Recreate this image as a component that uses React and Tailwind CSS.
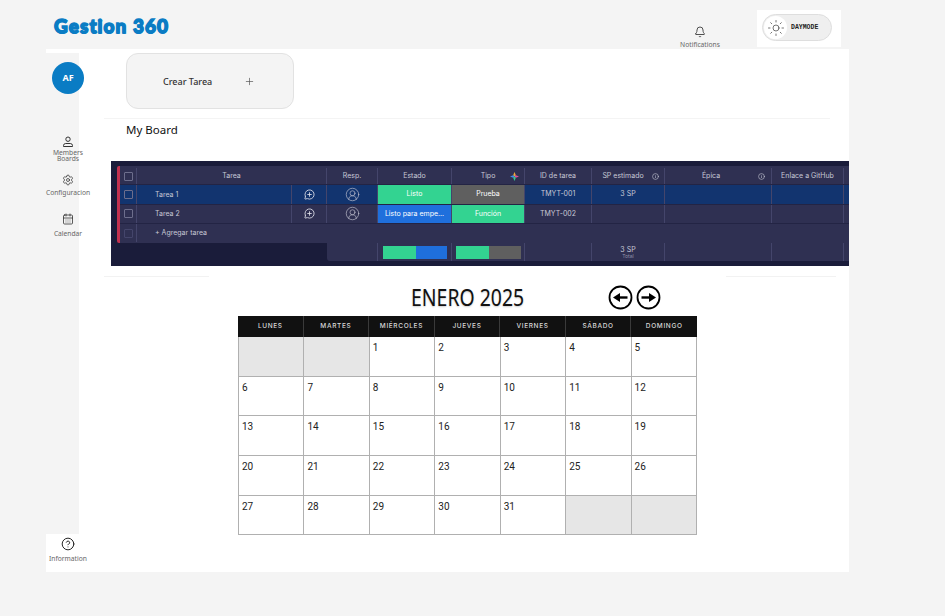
import React from 'react';
import { Bell, Plus, Settings, CalendarDays, CircleHelp, Sun, MessageCirclePlus, CircleUserRound, Info } from 'lucide-react';

const gridCols = 'grid grid-cols-[17px_155px_35px_51px_74px_73px_67px_73px_107px_72px_5px]';
const cell = 'flex items-center justify-center border-r border-[#44456b] min-w-0';

const Check = () => <div className="w-[9px] h-[9px] rounded-[1px] border border-[#6d6e8c]"></div>;

const BoardRow = ({ name, estado, estadoBg, tipo, tipoBg, id, sp, selected }) => {
  const bg = selected ? 'bg-[#12346f]' : 'bg-[#2f3052]';
  return (
    <div className={`${gridCols} h-[19.5px] border-b border-[#232444] ${bg}`}>
      <div className={cell}><Check /></div>
      <div className={`${cell} justify-start pl-[18px] pt-px`}>{name}</div>
      <div className={cell}><MessageCirclePlus size={11} strokeWidth={1.8} className="text-[#e4e5ee]" /></div>
      <div className={cell}><CircleUserRound size={15} strokeWidth={1} /></div>
      <div className={`${cell} ${estadoBg} text-white`}>{estado}</div>
      <div className={`${cell} ${tipoBg} text-white`}>{tipo}</div>
      <div className={cell}>{id}</div>
      <div className={cell}>{sp}</div>
      <div className={cell}></div>
      <div className={cell}></div>
      <div></div>
    </div>
  );
};

const Board = () => (
  <div className="w-[738px] h-[105px] bg-[#1a1c3a] pt-[5px] pl-[6px] text-[#c8c9d6] text-[7px] font-['Inter',sans-serif]">
    <div className="border-l-[3px] border-[#c2304f] rounded-l-[2px]">
      <div className={`${gridCols} h-[19px] pt-[2px] bg-[#2f3052] border-b border-[#232444]`}>
        <div className={cell}><Check /></div>
        <div className={`${cell} col-span-2`}>Tarea</div>
        <div className={cell}>Resp.</div>
        <div className={cell}>Estado</div>
        <div className={`${cell} relative`}>
          Tipo
          <svg className="absolute right-[5px]" width="9" height="9" viewBox="0 0 10 10">
            <path d="M5 0 L6.5 3.5 L5 5 L3.5 3.5 Z" fill="#f0a63c" />
            <path d="M10 5 L6.5 6.5 L5 5 L6.5 3.5 Z" fill="#e0509a" />
            <path d="M5 10 L3.5 6.5 L5 5 L6.5 6.5 Z" fill="#35c98f" />
            <path d="M0 5 L3.5 3.5 L5 5 L3.5 6.5 Z" fill="#3f8fe8" />
          </svg>
        </div>
        <div className={cell}>ID de tarea</div>
        <div className={`${cell} relative pr-[10px]`}>
          SP estimado
          <Info size={7} className="absolute right-[5px]" />
        </div>
        <div className={`${cell} relative pr-[14px]`}>
          Épica
          <Info size={7} className="absolute right-[6px]" />
        </div>
        <div className={cell}>Enlace a GitHub</div>
        <div></div>
      </div>
      <BoardRow name="Tarea 1" estado="Listo" estadoBg="bg-[#33d391]" tipo="Prueba" tipoBg="bg-[#5f5f5f]" id="TMYT-001" sp="3 SP" selected />
      <BoardRow name="Tarea 2" estado="Listo para empe..." estadoBg="bg-[#1f6fdc]" tipo="Función" tipoBg="bg-[#33d391]" id="TMYT-002" sp="" />
      <div className={`${gridCols} h-[19px] pb-px bg-[#2f3052]`}>
        <div className={cell}><div className="w-[9px] h-[9px] rounded-[1px] border border-[#44456b]"></div></div>
        <div className="col-span-10 flex items-center pl-[18px]">+ Agregar tarea</div>
      </div>
    </div>
    <div className={`${gridCols} h-[18px] pl-[3px]`}>
      <div className="col-span-3"></div>
      <div className={`${cell} bg-[#2f3052] rounded-bl-[3px]`}></div>
      <div className={`${cell} bg-[#2f3052]`}>
        <div className="flex w-[64px] h-[13px]">
          <div className="w-[33px] bg-[#33d391]"></div>
          <div className="flex-1 bg-[#1f6fdc]"></div>
        </div>
      </div>
      <div className={`${cell} bg-[#2f3052]`}>
        <div className="flex w-[65px] h-[13px]">
          <div className="w-[33px] bg-[#33d391]"></div>
          <div className="flex-1 bg-[#5f5f5f]"></div>
        </div>
      </div>
      <div className={`${cell} bg-[#2f3052]`}></div>
      <div className={`${cell} bg-[#2f3052] flex-col leading-[7px]`}>
        <span>3 SP</span>
        <span className="text-[5px] leading-[6px] text-[#8f90a8]">Total</span>
      </div>
      <div className={`${cell} bg-[#2f3052]`}></div>
      <div className={`${cell} bg-[#2f3052]`}></div>
      <div className="bg-[#2f3052]"></div>
    </div>
  </div>
);

const days = ['LUNES', 'MARTES', 'MIÉRCOLES', 'JUEVES', 'VIERNES', 'SÁBADO', 'DOMINGO'];
const cells = [null, null, 1, 2, 3, 4, 5, 6, 7, 8, 9, 10, 11, 12, 13, 14, 15, 16, 17, 18, 19, 20, 21, 22, 23, 24, 25, 26, 27, 28, 29, 30, 31, null, null];

const Calendar = () => (
  <div className="w-[459px]">
    <div className="grid grid-cols-7 h-[21px] bg-[#111111]">
      {days.map((d) => (
        <div key={d} className="flex items-center justify-center border-r border-[#3a3a3a] last:border-r-0 text-[#d8d8d8] text-[6.5px] font-medium tracking-[0.1em] font-['Inter',sans-serif]">{d}</div>
      ))}
    </div>
    <div className="grid grid-cols-7 border-l border-[#b0b0b0]">
      {cells.map((c, i) => (
        <div key={i} className={`h-[39.7px] border-r border-b border-[#b0b0b0] pl-[3px] pt-[3px] text-[10px] text-[#222] font-['Roboto',sans-serif] ${c ? 'bg-white' : 'bg-[#e6e6e6]'}`}>{c}</div>
      ))}
    </div>
  </div>
);

const MemberIcon = ({ className }) => (
  <svg className={className} width="12" height="12" viewBox="0 0 12 12" fill="none" stroke="currentColor" strokeWidth="1">
    <circle cx="6" cy="3.2" r="2.2" />
    <path d="M1.5 10.5 V9.5 A2.2 2.2 0 0 1 3.7 7.5 H8.3 A2.2 2.2 0 0 1 10.5 9.5 V10.5 Z" />
  </svg>
);

const ArrowButton = ({ flip, className }) => (
  <svg className={`${flip ? '-scale-x-100' : ''} ${className}`} width="25" height="25" viewBox="0 0 25 25" fill="none">
    <circle cx="12.5" cy="12.5" r="11" stroke="black" strokeWidth="1.8" />
    <path d="M5.5 12.5 H14" stroke="black" strokeWidth="2.4" />
    <path d="M13 8 L20 12.5 L13 17 Z" fill="black" />
  </svg>
);

export default function App() {
  return (
    <div className="h-[616px] w-[945px] overflow-hidden bg-[#f4f4f4] font-['Noto_Sans',sans-serif]">
      <header className="h-[49px] flex">
        <div className="ml-[54px] mt-[12px] w-[120px] h-[27px] text-[19px] leading-[27px] whitespace-nowrap font-black font-['Lato',sans-serif] text-[#0a7cc4] tracking-[0.055em] [-webkit-text-stroke:1.4px_#0a7cc4] [text-shadow:0_1px_0_#0a7cc4]">Gestion 360</div>
        <div className="ml-[501px] mt-[26px] w-[50px] flex flex-col items-center text-[6.7px] leading-[9px] text-[#666] whitespace-nowrap">
          <Bell size={12} strokeWidth={1.7} className="text-[#333] mb-[2px]" />
          Notifications
        </div>
        <div className="ml-[32px] mt-[10px] w-[84px] h-[37px] bg-white pl-[5px] pt-[4px]">
          <div className="w-[70px] h-[27px] rounded-full bg-[#efefef] border border-[#dedede] flex items-center pl-px">
            <div className="w-[23px] h-[23px] rounded-full bg-white flex items-center justify-center">
              <Sun size={18} strokeWidth={0.9} className="text-[#333]" />
            </div>
            <span className="ml-[4px] text-[6.5px] font-bold text-[#222] font-['Liberation_Mono',monospace]">DAYMODE</span>
          </div>
        </div>
      </header>
      <div className="ml-[46px] w-[803px] h-[523px] bg-white flex">
        <aside className="w-[33px] flex flex-col pt-[4px] text-[#666] text-[6.7px]">
          <div className="h-[481px] bg-[#f4f4f4] flex flex-col">
            <div className="w-[44px] flex justify-center mt-[9px]">
              <div className="w-[32px] h-[32px] rounded-full bg-[#0a7cc4] text-white text-[9px] font-bold flex items-center justify-center">AF</div>
            </div>
            <div className="w-[44px] mt-[42px] flex flex-col items-center">
              <MemberIcon className="text-[#333] mb-[2px]" />
              <span className="text-center leading-[6px]">Members<br />Boards</span>
            </div>
            <div className="w-[44px] mt-[12px] flex flex-col items-center">
              <Settings size={12} strokeWidth={1.5} className="text-[#333] mb-[3px]" />
              <span className="leading-[7px] whitespace-nowrap">Configuracion</span>
            </div>
            <div className="w-[44px] mt-[17px] flex flex-col items-center">
              <CalendarDays size={12} strokeWidth={1.6} className="text-[#333] mb-[5px]" />
              <span className="leading-[7px]">Calendar</span>
            </div>
          </div>
          <div className="w-[44px] mt-[3px] flex flex-col items-center">
            <CircleHelp size={14} strokeWidth={1.7} className="text-[#222] mb-[4px]" />
            <span className="leading-[7px]">Information</span>
          </div>
        </aside>
        <main className="flex-1 min-w-0 flex flex-col">
          <div className="ml-[47px] mt-[4px] w-[168px] h-[56px] pt-px rounded-xl bg-[#f4f4f4] border border-[#e2e2e2] flex items-center text-[9px] font-medium text-[#333]">
            <span className="ml-[36px]">Crear Tarea</span>
            <Plus size={11} strokeWidth={1.5} className="ml-[32px] text-[#555]" />
          </div>
          <div className="ml-[25px] mt-[9px] w-[726px] border-t border-[#f4f4f4]"></div>
          <h2 className="ml-[47px] mt-[3px] text-[11.5px] leading-[16px] text-[#111]">My Board</h2>
          <div className="ml-[32px] mt-[23px]"><Board /></div>
          <div className="ml-[25px] mt-[10px] w-[732px] flex justify-between">
            <div className="w-[105px] border-t border-[#f2f2f2]"></div>
            <div className="w-[110px] border-t border-[#f2f2f2]"></div>
          </div>
          <div className="ml-[159px] mt-[2px] w-[459px] h-[37px] flex items-center">
            <h1 className="ml-[173px] w-[115px] -mt-px origin-left scale-x-[.81] text-[24px] text-[#111] whitespace-nowrap [text-shadow:0_1px_2px_rgba(0,0,0,0.2)]">ENERO 2025</h1>
            <ArrowButton flip className="ml-[82px]" />
            <ArrowButton className="ml-[3px]" />
          </div>
          <div className="ml-[159px]"><Calendar /></div>
        </main>
      </div>
    </div>
  );
}
